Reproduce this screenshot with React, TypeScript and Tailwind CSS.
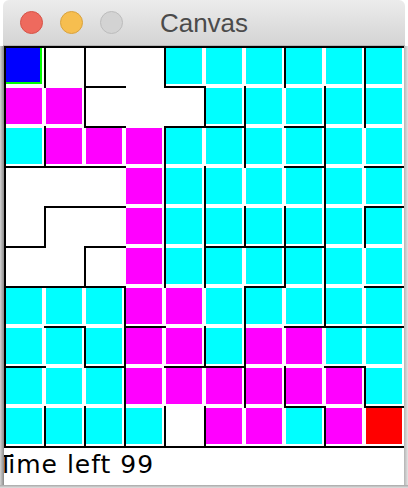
const rows = [
  "BWWWCCCCCC",
  "MMWWWCCCCC",
  "CMMMCCCCCC",
  "WWWMCCCCCC",
  "WWWMCCCCCC",
  "WWWMCCCCCC",
  "CCCMMCCCCC",
  "CCCMMCMMCC",
  "CCCMMMMMMC",
  "CCCCWMMCMR",
];

const fills: Record<string, string> = {
  B: "bg-[#0000ff] border-r-2 border-b-2 border-[#00ff00]",
  W: "bg-white",
  C: "bg-[#00ffff]",
  M: "bg-[#ff00ff]",
  R: "bg-[#ff0000]",
};

// [row, col] = wall on top edge of that cell
const hWalls: [number, number][] = [
  [1, 2], [1, 4],
  [2, 2], [2, 4], [2, 5], [2, 7],
  [3, 0], [3, 1], [3, 2], [3, 7], [3, 9],
  [4, 1], [4, 2], [4, 9],
  [5, 0], [5, 2], [5, 5], [5, 6], [5, 7],
  [6, 0], [6, 1], [6, 2], [6, 6], [6, 9],
  [7, 1], [7, 3], [7, 7], [7, 8], [7, 9],
  [8, 0], [8, 2], [8, 4], [8, 5], [8, 8],
  [9, 7], [9, 9],
];

// [row, col] = wall on left edge of that cell
const vWalls: [number, number][] = [
  [0, 1], [0, 2], [0, 4], [0, 7], [0, 9],
  [1, 2], [1, 5], [1, 6], [1, 8], [1, 9],
  [2, 1], [2, 4], [2, 6], [2, 8],
  [3, 4], [3, 5], [3, 8],
  [4, 1], [4, 4], [4, 5], [4, 6], [4, 7], [4, 8], [4, 9],
  [5, 2], [5, 4], [5, 5], [5, 7], [5, 8],
  [6, 3], [6, 6], [6, 8],
  [7, 2], [7, 3], [7, 5], [7, 6],
  [8, 3], [8, 6], [8, 7], [8, 9],
  [9, 1], [9, 2], [9, 3], [9, 4], [9, 5], [9, 8],
];

function TrafficLight({ color }: { color: string }) {
  return <div className={`h-[23px] w-[23px] rounded-full border ${color}`} />;
}

function Maze() {
  return (
    <div className="relative h-[402px] w-[400px] bg-white">
      <div className="grid grid-cols-[repeat(10,40px)] pl-[2px] pt-[2px]">
        {rows.map((row, r) =>
          row.split("").map((k, c) => (
            <div key={`${r}-${c}`} className="h-10 w-10 pr-1 pb-1">
              <div className={`h-full w-full ${fills[k]}`} />
            </div>
          ))
        )}
      </div>
      <svg className="absolute inset-0" width="400" height="402" viewBox="0 0 400 402">
        <rect x="0" y="0" width="400" height="2" fill="#000" />
        <rect x="0" y="0" width="2" height="402" fill="#000" />
        <rect x="0" y="400" width="400" height="2" fill="#000" />
        {hWalls.map(([r, c]) => (
          <rect key={`h${r}-${c}`} x={c * 40} y={r * 40} width="42" height="2" fill="#000" />
        ))}
        {vWalls.map(([r, c]) => (
          <rect key={`v${r}-${c}`} x={c * 40} y={r * 40} width="2" height="42" fill="#000" />
        ))}
      </svg>
    </div>
  );
}

export default function App() {
  return (
    <div className="flex h-[488px] w-[408px] flex-col bg-white font-['Liberation_Sans',sans-serif]">
      <div className="mx-[3px] flex h-[46px] items-center rounded-t-[6px] border-b border-[#b4b4b4] bg-gradient-to-b from-[#ececec] to-[#d4d4d4] pl-[17px]">
        <div className="flex gap-[17px]">
          <TrafficLight color="bg-[#ee6a5e] border-[#d65347]" />
          <TrafficLight color="bg-[#f6be4f] border-[#d9a23d]" />
          <TrafficLight color="bg-[#d3d3d3] border-[#bcbcbc]" />
        </div>
        <div className="flex-1 pr-[120px] text-center text-[26px] leading-none text-[#4b4b4b]">Canvas</div>
      </div>
      <div className="flex">
        <div className="w-[4px] bg-gradient-to-r from-[#d4d4d4] to-[#8a8a8a]" />
        <div className="flex w-[400px] flex-col">
          <Maze />
          <div className="h-[37px] overflow-hidden whitespace-nowrap bg-white pt-[3px] font-['DejaVu_Sans',sans-serif] text-[25px] leading-[28px] tracking-[1px] text-black">
            <span className="ml-[-6px] mr-[-6px]">T</span>ime left 99
          </div>
        </div>
        <div className="w-[4px] bg-gradient-to-r from-[#b4b4b4] to-[#e4e4e4]" />
      </div>
      <div className="h-[3px] bg-gradient-to-b from-[#a8a8a8] to-[#e2e2e2]" />
    </div>
  );
}
